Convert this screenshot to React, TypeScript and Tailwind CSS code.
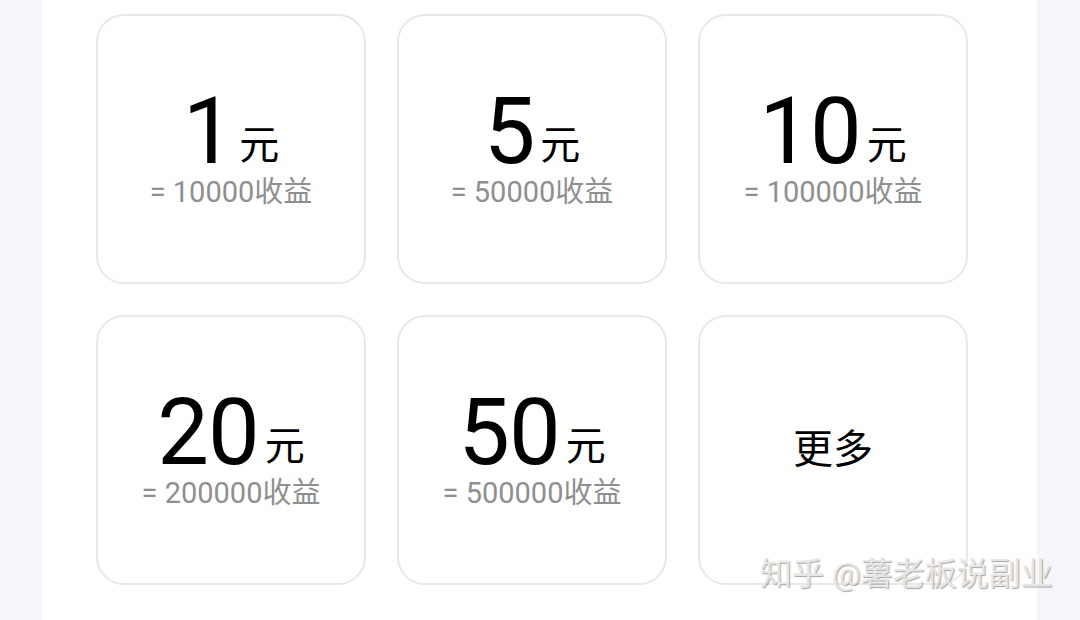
import React from "react";

const items = [
  { n: "1", v: "= 10000收益" },
  { n: "5", v: "= 50000收益" },
  { n: "10", v: "= 100000收益" },
  { n: "20", v: "= 200000收益" },
  { n: "50", v: "= 500000收益" },
];

const font = { fontFamily: 'Roboto, "Noto Sans CJK SC", sans-serif' };

export default function App() {
  return (
    <div className="w-[1080px] h-[620px] bg-[#f5f6fa] flex relative overflow-hidden" style={font}>
      <div className="ml-[42px] w-[995px] h-full bg-white pl-[54px] pt-[14px]">
        <div className="grid grid-cols-[270px_270px_270px] gap-[31px]">
          {items.map((it) => (
            <div
              key={it.n}
              className="w-[270px] h-[270px] rounded-[28px] border-2 border-[#e8e8e8] flex flex-col items-center pt-[70px]"
            >
              <div className="flex items-baseline text-black">
                <span className="text-[92px] leading-none tracking-[-1px]">{it.n}</span>
                <span className="text-[40px] leading-none ml-[6px] -translate-y-[4px]">元</span>
              </div>
              <div className="text-[29px] leading-none text-[#8f8f8f]">{it.v}</div>
            </div>
          ))}
          <div className="w-[270px] h-[270px] rounded-[28px] border-2 border-[#e8e8e8] flex items-center justify-center">
            <span className="text-[40px] leading-none text-black">更多</span>
          </div>
        </div>
      </div>
      <div className="absolute left-[760px] top-[558px] text-[32px] leading-none text-[#e6e6e6] whitespace-nowrap [text-shadow:1px_1px_1px_rgba(0,0,0,0.35)]">
        知乎 @薯老板说副业
      </div>
    </div>
  );
}
